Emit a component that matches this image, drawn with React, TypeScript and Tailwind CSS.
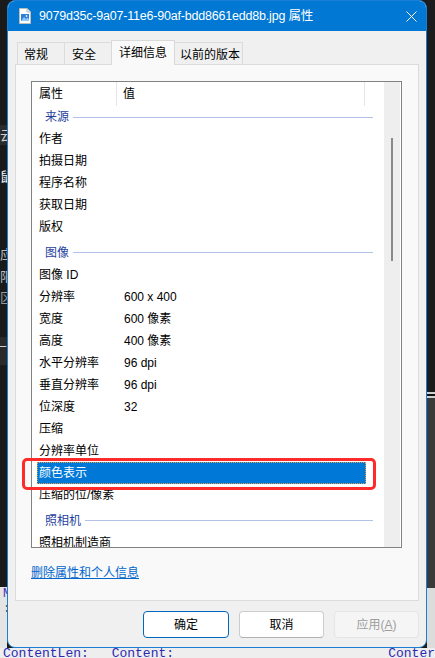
import React from 'react';

const FONT = { fontFamily: '"Liberation Sans", "Noto Sans CJK SC", sans-serif' };

type Item =
  | { kind: 'group'; label: string; first?: boolean }
  | { kind: 'row'; name: string; value?: string; selected?: boolean };

const items: Item[] = [
  { kind: 'group', label: '来源', first: true },
  { kind: 'row', name: '作者' },
  { kind: 'row', name: '拍摄日期' },
  { kind: 'row', name: '程序名称' },
  { kind: 'row', name: '获取日期' },
  { kind: 'row', name: '版权' },
  { kind: 'group', label: '图像' },
  { kind: 'row', name: '图像 ID' },
  { kind: 'row', name: '分辨率', value: '600 x 400' },
  { kind: 'row', name: '宽度', value: '600 像素' },
  { kind: 'row', name: '高度', value: '400 像素' },
  { kind: 'row', name: '水平分辨率', value: '96 dpi' },
  { kind: 'row', name: '垂直分辨率', value: '96 dpi' },
  { kind: 'row', name: '位深度', value: '32' },
  { kind: 'row', name: '压缩' },
  { kind: 'row', name: '分辨率单位' },
  { kind: 'row', name: '颜色表示', selected: true },
  { kind: 'row', name: '压缩的位/像素' },
  { kind: 'group', label: '照相机' },
  { kind: 'row', name: '照相机制造商' },
];

function FileIcon() {
  return (
    <svg width="12" height="16" viewBox="0 0 12 16">
      <path d="M0.5 0.5h7.5l3.5 3.5v11.5h-11z" fill="#ffffff" stroke="#bdbdbd" />
      <path d="M8 0.5v3.5h3.5" fill="#e6e6e6" stroke="#bdbdbd" />
      <rect x="2" y="6" width="8" height="7" fill="#2f7fd6" />
      <path d="M2 13l3-4 2 2 1.5-1.5 1.5 1.5v2z" fill="#8cc8ff" />
      <circle cx="7.5" cy="8" r="0.9" fill="#d8ecff" />
    </svg>
  );
}

function Tab({ label, w, pl, active }: { label: string; w: number; pl: number; active?: boolean }) {
  return (
    <div
      className={
        active
          ? 'relative z-10 -mb-px h-[25px] -ml-px border border-b-0 border-[#d9d9d9] bg-[#f9f9f9] pt-[3px] text-[12px] text-black'
          : 'h-[22px] -ml-px border border-b-0 border-[#dcdcdc] bg-[#f0f0f0] pt-[3px] text-[12px] text-black first:ml-0'
      }
      style={{ width: w, paddingLeft: pl }}
    >
      {label}
    </div>
  );
}

function GroupRow({ label, first }: { label: string; first?: boolean }) {
  return (
    <div
      className={
        first
          ? 'flex h-[22px] shrink-0 items-center pl-[13px]'
          : 'flex h-[26px] shrink-0 items-center pl-[13px] pt-[3px]'
      }
    >
      <span className="text-[12px] text-[#1f3fa0]">{label}</span>
      <div className="ml-[4px] h-px w-full max-w-[300px] flex-1 bg-[#b3c1e6]" />
      <div className="w-[11px]" />
    </div>
  );
}

function PropRow({ name, value, selected }: { name: string; value?: string; selected?: boolean }) {
  return (
    <div className="flex h-[22px] shrink-0 items-stretch pl-[5px]">
      <div
        className={
          selected
            ? 'flex w-[329px] items-center border border-dotted border-[#e0a050] bg-[#0078d7] pl-px text-white'
            : 'flex w-[329px] items-center pl-[2px] text-black'
        }
      >
        <span className="w-[85px] shrink-0 text-[12px]">{name}</span>
        {value && <span className="text-[12px]">{value}</span>}
      </div>
    </div>
  );
}

export default function App() {
  return (
    <div className="flex h-[658px] w-[435px] flex-col overflow-hidden bg-[#1b1b1b]" style={FONT}>
      <div className="flex h-[648px]">
        {/* desktop bits left of the dialog */}
        <div className="flex w-[7px] flex-col overflow-hidden text-[13px] leading-none">
          <div className="h-[125px] bg-[#1a1a1a]" />
          <div className="flex h-[20px] items-center bg-[#2b2b2b] text-[#cfcfcf]">云</div>
          <div className="flex h-[38px] items-end bg-[#1a1a1a] text-white">鼠</div>
          <div className="h-[60px] bg-[#1a1a1a]" />
          <div className="flex h-[22px] items-center bg-[#1a1a1a] text-[#bdbdbd]">应</div>
          <div className="flex h-[22px] items-center bg-[#1a1a1a] text-[#bdbdbd]">阳</div>
          <div className="flex h-[20px] items-center bg-[#1a1a1a] text-[#9a9a9a]">区</div>
          <div className="h-[30px] bg-[#1a1a1a]" />
          <div className="flex h-[28px] items-center justify-end bg-[#2a2a2a] text-[#cfcfcf]">厂</div>
          <div className="h-[222px] bg-[#1a1a1a]" />
          <div className="flex h-[61px] flex-col bg-[#e4e4e4] pl-[3px] font-mono text-[13px]">
            <span className="text-[#5030b0]">M</span>
            <span className="mt-[2px] text-[#404040]">:</span>
          </div>
        </div>

        {/* dialog window */}
        <div className="flex w-[420px] flex-col overflow-hidden rounded-[8px] border border-[#1a7fd4] bg-[#f0f0f0]">
          <div className="flex h-[30px] shrink-0 items-center bg-[#0078d4] pl-[11px] pr-[9px]">
            <FileIcon />
            <span className="ml-[8px] text-[12.5px] tracking-[-0.2px] text-white">
              9079d35c-9a07-11e6-90af-bdd8661edd8b.jpg 属性
            </span>
            <svg className="ml-auto" width="11" height="11" viewBox="0 0 11 11">
              <path d="M0.5 0.5l10 10M10.5 0.5l-10 10" stroke="#ffffff" strokeWidth="1" />
            </svg>
          </div>

          <div className="flex flex-1 flex-col px-[7px]">
            <div className="flex h-[33px] items-end pl-[2px]">
              <Tab label="常规" w={48} pl={6} />
              <Tab label="安全" w={48} pl={7} />
              <Tab label="详细信息" w={64} pl={7} active />
              <Tab label="以前的版本" w={69} pl={5} />
            </div>

            <div className="flex h-[537px] flex-col border border-[#dcdcdc] bg-[#f9f9f9] px-[15px] pt-[16px]">
              <div className="relative h-[467px] w-[371px] shrink-0 border border-[#828282] bg-white">
                <div className="flex h-full">
                  <div className="flex h-full w-[352px] flex-col overflow-hidden">
                    <div className="flex h-[24px] shrink-0 items-stretch text-[12px] text-black">
                      <div className="flex w-[85px] items-center border-r border-[#e5e5e5] pl-[7px]">属性</div>
                      <div className="flex w-[248px] items-center border-r border-[#e5e5e5] pl-[6px]">值</div>
                    </div>
                    {items.map((it, i) =>
                      it.kind === 'group' ? (
                        <GroupRow key={i} label={it.label} first={it.first} />
                      ) : (
                        <PropRow key={i} name={it.name} value={it.value} selected={it.selected} />
                      )
                    )}
                  </div>
                  <div className="mr-px flex w-[16px] flex-col bg-[#eeeeee] pt-[56px]">
                    <div className="mx-auto h-[123px] w-[2px] bg-[#8a8a8a]" />
                  </div>
                </div>
                {/* red annotation around the selected row */}
                <div className="absolute left-[-10px] top-[376px] h-[32px] w-[354px] rounded-[5px] border-[3px] border-[#ff2a2a]" />
              </div>

              <div className="mt-[17px] text-[12px] leading-[16px]">
                <span className="text-[#0066cc] underline">删除属性和个人信息</span>
              </div>
            </div>

            <div className="flex justify-end gap-[10px] pt-[10px]">
              <button className="h-[27px] w-[86px] rounded-[4px] border border-[#0067c0] bg-white text-[12px] text-black">
                确定
              </button>
              <button className="h-[27px] w-[85px] rounded-[4px] border border-[#cccccc] border-b-[#b0b0b0] bg-white text-[12px] text-black">
                取消
              </button>
              <button className="h-[27px] w-[85px] rounded-[4px] border border-[#e5e5e5] bg-[#f5f5f5] text-[12px] text-[#9d9d9d]">
                应用(<span className="underline">A</span>)
              </button>
            </div>
          </div>
        </div>

        {/* desktop bits right of the dialog */}
        <div className="flex w-[8px] flex-col">
          <div className="h-[392px] bg-[#1c1c1c]" />
          <div className="h-[2px] bg-[#d0d0d0]" />
          <div className="h-[2px] bg-[#111111]" />
          <div className="h-[2px] bg-[#d0d0d0]" />
          <div className="h-[190px] bg-[#3a3a3a]" />
          <div className="flex-1 bg-[#dcdcdc]" />
        </div>
      </div>

      <div className="relative h-[10px] overflow-hidden bg-[#eeeeee] font-mono text-[13px] leading-[16px] text-[#2a2ab0]">
        <div className="-mt-[2px] flex whitespace-pre pl-[3px]" style={{ fontFamily: '"Liberation Mono", monospace' }}>
          <span className="w-[110px]">ContentLen:</span>
          <span className="w-[280px]">Content:</span>
          <span>Conter</span>
        </div>
      </div>
    </div>
  );
}
